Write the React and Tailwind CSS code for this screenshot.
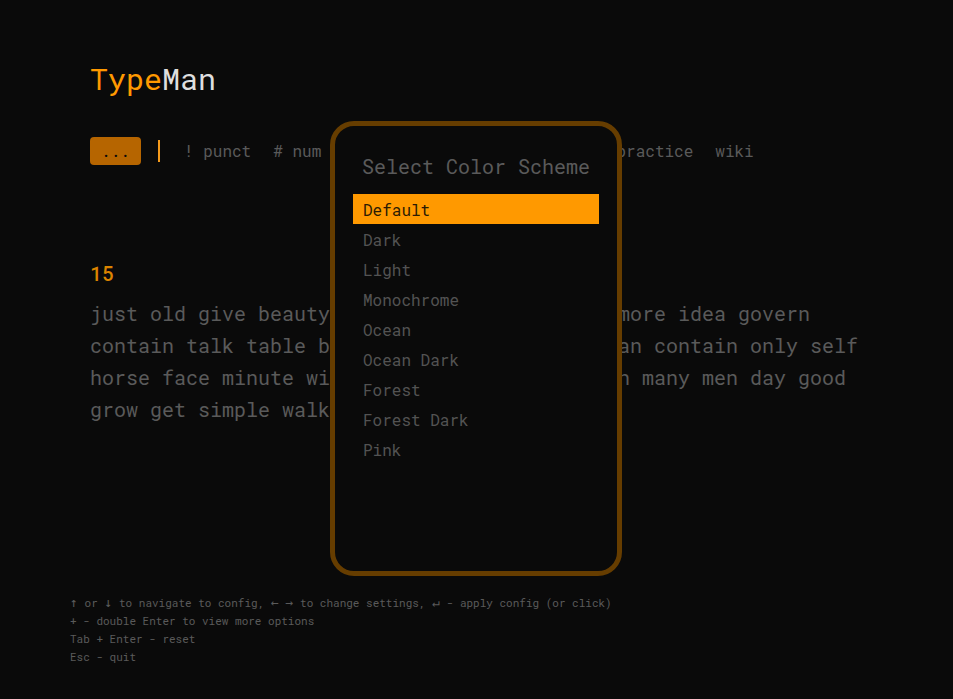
import { useState } from "react";

const NAV_ITEMS = ["! punct", "# num", "time", "words", "15", "30", "text", "practice", "wiki"];

const WORDS =
  "just old give beauty study water point hand more idea govern " +
  "contain talk table because school animal woman contain only self " +
  "horse face minute window strong colour listen many men day good " +
  "grow get simple walk";

const SCHEMES = [
  "Default",
  "Dark",
  "Light",
  "Monochrome",
  "Ocean",
  "Ocean Dark",
  "Forest",
  "Forest Dark",
  "Pink",
];

function Arrow({ children }) {
  return (
    <span className="inline-block w-2 text-center font-['DejaVu_Sans_Mono',monospace] text-[13px] leading-none">
      {children}
    </span>
  );
}

function ConfigBar() {
  return (
    <nav className="mt-9 flex h-7 items-center whitespace-nowrap text-base text-[#5a5a5a]">
      <button
        type="button"
        className="h-7 w-[51px] shrink-0 rounded-[4px] bg-[#b66500] leading-7 text-[#0a0a0a]"
      >
        ...
      </button>
      <span className="ml-[17px] h-[22px] w-[2px] shrink-0 bg-[#f59a1b]" />
      <ul className="ml-6 flex gap-[22px]">
        {NAV_ITEMS.map((item) => (
          <li key={item}>
            <button type="button">{item}</button>
          </li>
        ))}
      </ul>
    </nav>
  );
}

function SchemeDialog() {
  const [selected, setSelected] = useState("Default");
  return (
    <div className="fixed inset-0 flex items-center justify-center pb-[2px]">
      <section
        role="dialog"
        aria-labelledby="scheme-title"
        className="mr-px h-[455px] w-[292px] rounded-3xl border-5 border-[#663d00] bg-[#0a0a0a] px-[18px] pt-6"
      >
        <h2 id="scheme-title" className="text-center text-xl leading-8 text-[#5a5a5a]">
          Select Color Scheme
        </h2>
        <ul className="mt-3">
          {SCHEMES.map((name) => (
            <li key={name}>
              <button
                type="button"
                aria-pressed={name === selected}
                onClick={() => setSelected(name)}
                className={
                  name === selected
                    ? "block h-[30px] w-full bg-[#ff9900] px-[10px] pt-[2px] text-left text-base leading-7 text-[#2b1b04]"
                    : "block h-[30px] w-full px-[10px] pt-[2px] text-left text-base leading-7 text-[#535353]"
                }
              >
                {name}
              </button>
            </li>
          ))}
        </ul>
      </section>
    </div>
  );
}

export default function App() {
  return (
    <div className="flex min-h-screen flex-col bg-[#0a0a0a] font-['Roboto_Mono','Liberation_Mono','DejaVu_Sans_Mono',monospace]">
      <main className="px-[90px] pt-[59px]">
        <h1 className="pb-[2px] text-[30px] leading-10 text-[#dedede]">
          <span className="text-[#ff9900]">Type</span>Man
        </h1>
        <ConfigBar />
        <p className="mt-[92px] text-xl font-medium leading-8 text-[#db8400]">15</p>
        <p className="mt-2 text-xl leading-8 text-[#5a5a5a]">{WORDS}</p>
      </main>
      <footer className="mt-auto px-[70px] pb-[33px] text-[11px] leading-[18px] text-[#5a5a5a]">
        <p>
          <Arrow>↑</Arrow> or <Arrow>↓</Arrow> to navigate to config, <Arrow>←</Arrow>{" "}
          <Arrow>→</Arrow> to change settings, <Arrow>↵</Arrow> - apply config (or click)
        </p>
        <p>+ - double Enter to view more options</p>
        <p>Tab + Enter - reset</p>
        <p>Esc - quit</p>
      </footer>
      <SchemeDialog />
    </div>
  );
}
